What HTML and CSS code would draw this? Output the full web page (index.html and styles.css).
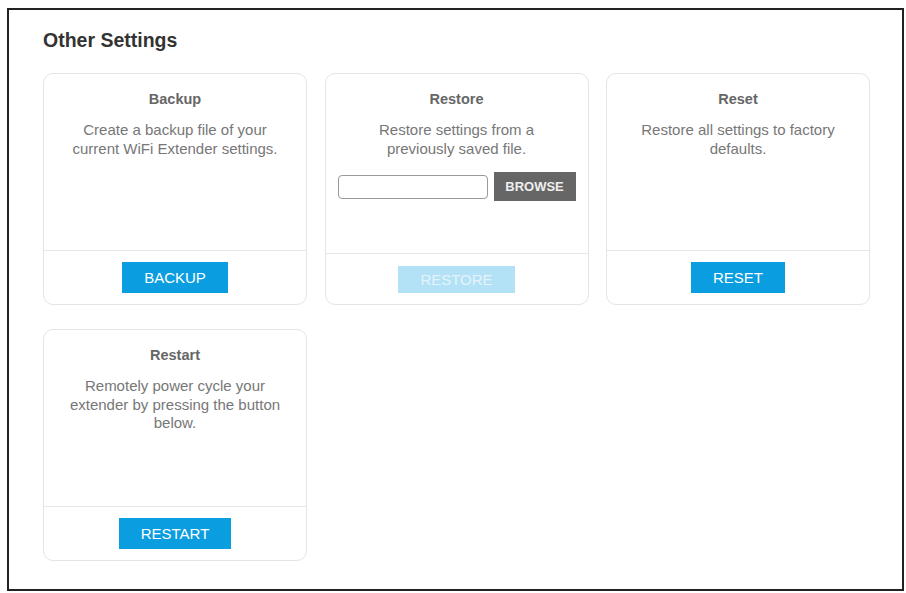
FILE: index.html
```html
<!DOCTYPE html>
<html lang="en">
<head>
    <meta charset="UTF-8">
    <meta name="viewport" content="width=device-width, initial-scale=1.0">
    <title>Other Settings</title>
    <link rel="stylesheet" href="styles.css">
</head>
<body>

    <div class="panel">
        <h1 class="panel-title">Other Settings</h1>

        <div class="card-grid">
            <div class="card">
                <div class="card-body">
                    <h2 class="card-title">Backup</h2>
                    <p class="card-text">Create a backup file of your current WiFi Extender settings.</p>
                </div>
                <div class="card-foot">
                    <button type="button" class="btn">BACKUP</button>
                </div>
            </div>

            <div class="card">
                <div class="card-body">
                    <h2 class="card-title">Restore</h2>
                    <p class="card-text">Restore settings from a previously saved file.</p>
                    <div class="file-row">
                        <input type="text" class="file-input" readonly>
                        <button type="button" class="btn-browse">BROWSE</button>
                    </div>
                </div>
                <div class="card-foot card-foot-sm">
                    <button type="button" class="btn btn-sm" disabled>RESTORE</button>
                </div>
            </div>

            <div class="card">
                <div class="card-body">
                    <h2 class="card-title">Reset</h2>
                    <p class="card-text">Restore all settings to factory defaults.</p>
                </div>
                <div class="card-foot">
                    <button type="button" class="btn">RESET</button>
                </div>
            </div>

            <div class="card">
                <div class="card-body">
                    <h2 class="card-title">Restart</h2>
                    <p class="card-text">Remotely power cycle your extender by pressing the button below.</p>
                </div>
                <div class="card-foot">
                    <button type="button" class="btn">RESTART</button>
                </div>
            </div>
        </div>
    </div>

</body>
</html>
```

FILE: styles.css
```css
body {
    font-family: "Liberation Sans", Arial, sans-serif;
    background-color: #fff;
    margin: 0;
    padding: 0;
    overflow: hidden;
}

.panel {
    box-sizing: border-box;
    height: 583px;
    margin: 8px 2px 2px 7px;
    padding: 18px 0 0 34px;
    border: 2px solid #222;
}

.panel-title {
    margin: 0 0 21px 0;
    font-size: 19.5px;
    line-height: 24px;
    font-weight: bold;
    color: #333;
}

.card-grid {
    display: grid;
    grid-template-columns: repeat(3, 264px);
    column-gap: 17.5px;
    row-gap: 24px;
}

.card {
    box-sizing: border-box;
    height: 232px;
    display: flex;
    flex-direction: column;
    border: 1px solid #e4e4e4;
    border-radius: 10px;
    text-align: center;
}

.card-body {
    flex: 1;
    padding: 15px 20px 0 20px;
}

.card-title {
    margin: 0;
    font-size: 14.5px;
    line-height: 20px;
    font-weight: bold;
    color: #666;
}

.card-text {
    margin: 12px 0 0 0;
    font-size: 15px;
    line-height: 18.5px;
    color: #777;
}

.file-row {
    display: flex;
    align-items: center;
    justify-content: center;
    gap: 6px;
    margin-top: 14px;
    margin-left: -8px;
    margin-right: -8px;
}

.file-input {
    box-sizing: border-box;
    width: 150px;
    height: 24px;
    margin: 0;
    border: 1px solid #9a9a9a;
    border-radius: 4px;
    background-color: #fff;
}

.btn-browse {
    width: 84px;
    height: 29px;
    padding: 0;
    border: none;
    background-color: #666;
    color: #eee;
    font-family: inherit;
    font-size: 13px;
    font-weight: bold;
}

.card-foot {
    border-top: 1px solid #e6e6e6;
    padding: 11px 0;
}

.card-foot-sm {
    padding: 12px 0 11px 0;
}

.btn {
    height: 31px;
    padding: 0 22px;
    border: none;
    background-color: #0a9ddf;
    color: #fff;
    font-family: inherit;
    font-size: 15px;
    cursor: pointer;
}

.btn-sm {
    height: 27px;
}

.btn:disabled {
    background-color: #b3e1f5;
    color: #e3f4fc;
    cursor: default;
}
```
